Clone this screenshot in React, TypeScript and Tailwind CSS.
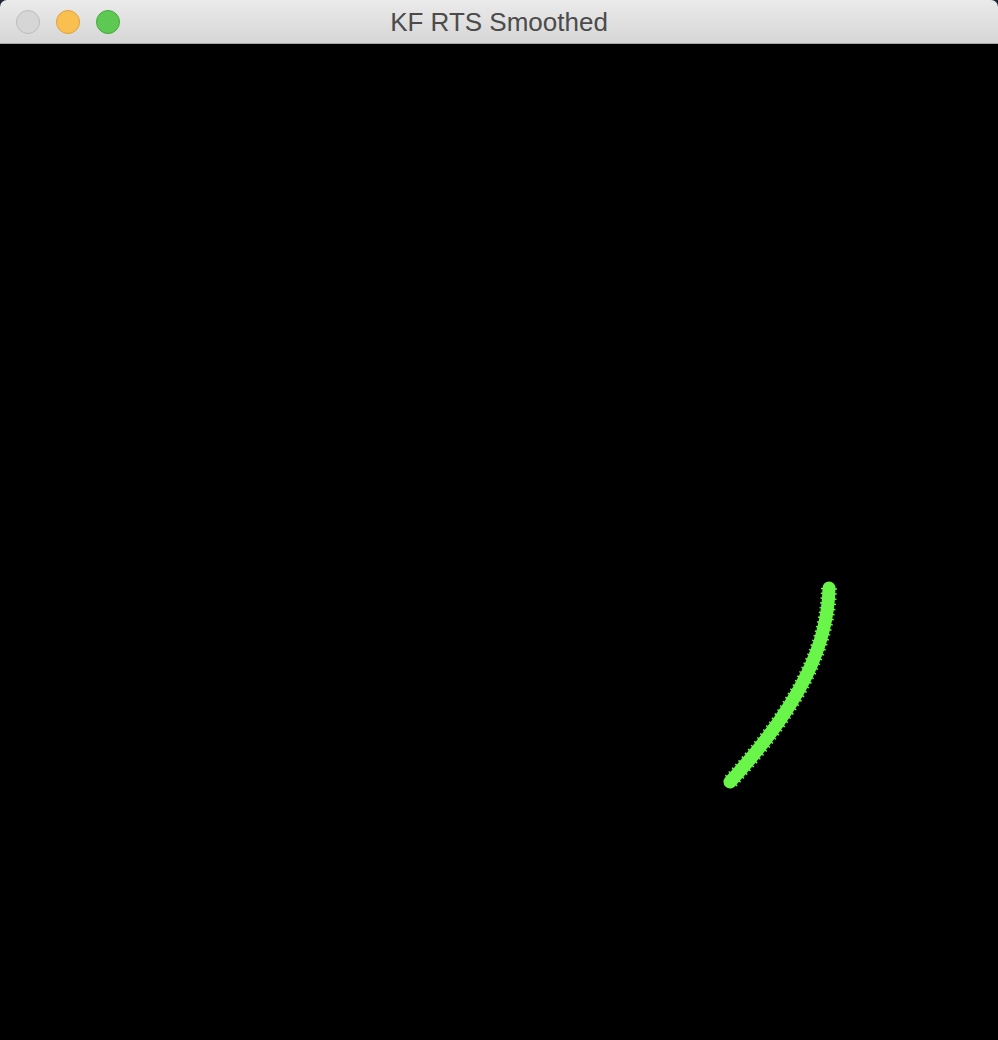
const TrafficLight = ({ fill, ring }: { fill: string; ring: string }) => (
  <span className={`block w-[24px] h-[24px] rounded-full border ${fill} ${ring}`} />
);

const App = () => {
  return (
    <div className="w-[998px] h-[1040px] bg-[#1d2633] overflow-hidden">
      <div className="w-full h-full flex flex-col rounded-t-[7px] overflow-hidden">
        <div className="relative h-[44px] shrink-0 bg-gradient-to-b from-[#ebebeb] to-[#d6d6d6] border-b border-[#a9a9a9] flex items-center">
          <div className="flex items-center gap-[16px] pl-[16px]">
            <TrafficLight fill="bg-[#d6d6d6]" ring="border-[#bdbdbd]" />
            <TrafficLight fill="bg-[#f9c04f]" ring="border-[#dfa23a]" />
            <TrafficLight fill="bg-[#5dc852]" ring="border-[#46a83d]" />
          </div>
          <div className="absolute inset-0 flex items-center justify-center pointer-events-none">
            <span className="text-[26px] text-[#4b4b4b] font-['Liberation_Sans',sans-serif] leading-none">
              KF RTS Smoothed
            </span>
          </div>
        </div>
        <div className="flex-1 bg-black">
          <svg width="998" height="996" viewBox="0 44 998 996" className="block">
            <path
              d="M829 588 C828 640 805 700 730 782"
              fill="none"
              stroke="#6af54a"
              strokeWidth="13"
              strokeLinecap="round"
            />
            <path
              d="M829 588 C828 640 805 700 730 782"
              fill="none"
              stroke="#6af54a"
              strokeWidth="16"
              strokeDasharray="1.5 3.5"
            />
          </svg>
        </div>
      </div>
    </div>
  );
};

export default App;
